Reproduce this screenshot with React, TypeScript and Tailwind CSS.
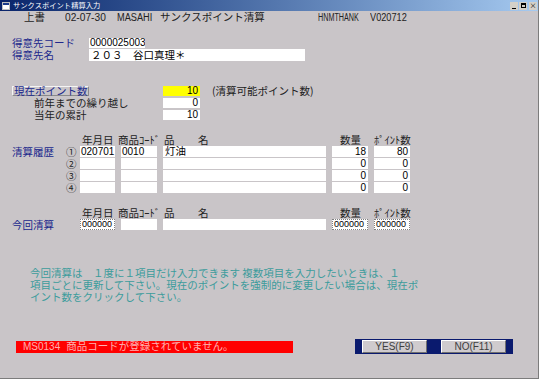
import React from "react";

const jp = "font-['Noto_Sans_CJK_JP','Noto_Sans',sans-serif]";
const num = "font-['Liberation_Sans',Arial,sans-serif]";

function Box({ w, h = "h-[11px]", text = "", right = false, bg = "bg-white", extra = "", size = "text-[10px]" }: { w: string; h?: string; text?: string; right?: boolean; bg?: string; extra?: string; size?: string }) {
  return (
    <div className={`${w} ${h} ${bg} ${extra} flex items-center ${right ? "justify-end pr-[2px]" : "pl-[1px]"} ${size} leading-none text-black ${num} overflow-hidden whitespace-nowrap`}>
      {text}
    </div>
  );
}

function HistoryRow({ mark, label, cells }: { mark: string; label?: string; cells: string[] }) {
  return (
    <div className="flex h-[11px] items-center pl-[12px]">
      <div className="w-[54px] text-[10.5px] leading-[11px] text-[#20288c]">{label}</div>
      <div className="w-[14px] text-[10.5px] leading-[11px] text-[#222]">{mark}</div>
      <Box w="w-[35px]" text={cells[0]} />
      <Box w="w-[36px] ml-[6px]" text={cells[1]} />
      <div className={`ml-[6px] flex h-[11px] w-[163px] items-center bg-white pl-[2px] text-[10.5px] leading-none text-black ${jp}`}>{cells[2]}</div>
      <Box w="w-[36px] ml-[6px]" text={cells[3]} right />
      <Box w="w-[36px] ml-[6px]" text={cells[4]} right />
    </div>
  );
}

function ColumnHeads() {
  return (
    <div className="flex h-[12px] items-center pl-[82px] text-[10.5px] leading-none text-[#222]">
      <span className="w-[36px]">年月日</span>
      <span className="w-[46px]">商品ｺｰﾄﾞ</span>
      <span className="w-[34px]">品</span>
      <span className="w-[142px]">名</span>
      <span className="w-[34px]">数量</span>
      <span>ﾎﾟｲﾝﾄ数</span>
    </div>
  );
}

function Narrow({ w, scale, children }: { w: string; scale: string; children: React.ReactNode }) {
  return (
    <span className={`${w} whitespace-nowrap`}>
      <span className={`inline-block origin-left ${scale} ${num} text-[10px]`}>{children}</span>
    </span>
  );
}

export default function App() {
  return (
    <div className={`flex h-[379px] w-[539px] flex-col overflow-hidden border-r border-b border-[#7c7c7c] bg-[#c9c5c8] ${jp}`}>
      {/* title bar */}
      <div className="flex h-[11px] items-center bg-gradient-to-r from-[#0a246a] to-[#a6caf0] pl-[2px] pr-[1px]">
        <div className="flex h-[8px] w-[8px] flex-col border border-[#c0c0c0] bg-white">
          <div className="h-[2px] bg-[#1c3c8c]" />
        </div>
        <span className="ml-[3px] text-[7.3px] leading-none text-white">サンクスポイント精算入力</span>
        <div className="ml-auto flex gap-[1px]">
          <div className="flex h-[8px] w-[8px] items-end justify-center bg-[#d4d0c8] pb-[1px]"><div className="h-[1px] w-[4px] bg-black" /></div>
          <div className="flex h-[8px] w-[8px] items-center justify-center bg-[#d4d0c8]"><div className="h-[5px] w-[5px] border border-t-2 border-black" /></div>
          <div className="ml-[1px] flex h-[8px] w-[8px] items-center justify-center bg-[#d4d0c8] text-[7px] leading-none text-black">×</div>
        </div>
      </div>

      {/* header */}
      <div className="mt-[1px] flex h-[11px] items-center pl-[24px] text-[10.5px] leading-none text-[#222]">
        <span className="w-[41px]">上書</span>
        <Narrow w="w-[52px]" scale="scale-x-[1.02]">02-07-30</Narrow>
        <Narrow w="w-[43px]" scale="scale-x-[0.92]">MASAHI</Narrow>
        <span className="w-[158px]">サンクスポイント清算</span>
        <Narrow w="w-[52px]" scale="scale-x-[0.72]">HNMTHANK</Narrow>
        <Narrow w="w-[45px]" scale="scale-x-[0.92]">V020712</Narrow>
      </div>

      {/* customer */}
      <div className="mt-[15px] flex h-[10px] items-center pl-[12px]">
        <span className="w-[77px] text-[10.5px] leading-[10px] text-[#20288c]">得意先コード</span>
        <Box w="w-[56px]" h="h-[10px]" text="0000025003" />
      </div>
      <div className="mt-[1px] flex h-[12px] items-center pl-[12px]">
        <span className="w-[77px] text-[10.5px] leading-[12px] text-[#20288c]">得意先名</span>
        <div className="flex h-[12px] w-[216px] items-center bg-white pl-[2px] text-[10.5px] leading-none text-black">２０３　谷口真理＊</div>
      </div>

      {/* points */}
      <div className="mt-[25px] flex h-[10px] items-center pl-[12px]">
        <button className="flex h-[10px] w-[77px] items-center border-t border-l border-r border-b border-t-[#f4f4f4] border-l-[#f4f4f4] border-r-[#8a8a8a] border-b-[#8a8a8a] pl-[1px] text-[10.5px] leading-none text-[#20288c]">
          現在ポイント数
        </button>
        <Box w="w-[37px] ml-[74px]" h="h-[10px]" bg="bg-[#ffff00]" text="10" right />
        <span className="ml-[12px] text-[10.5px] leading-none text-[#222]">(清算可能ポイント数)</span>
      </div>
      <div className="mt-[2px] flex h-[10px] items-center pl-[34px]">
        <span className="w-[129px] text-[10.5px] leading-[10px] text-[#222]">前年までの繰り越し</span>
        <Box w="w-[37px]" h="h-[10px]" text="0" right />
      </div>
      <div className="mt-[2px] flex h-[10px] items-center pl-[34px]">
        <span className="w-[129px] text-[10.5px] leading-[10px] text-[#222]">当年の累計</span>
        <Box w="w-[37px]" h="h-[10px]" text="10" right />
      </div>

      {/* history */}
      <div className="mt-[14px]">
        <ColumnHeads />
      </div>
      <div className="flex flex-col gap-[1px]">
        <HistoryRow mark="①" label="清算履歴" cells={["020701", "0010", "灯油", "18", "80"]} />
        <HistoryRow mark="②" cells={["", "", "", "0", "0"]} />
        <HistoryRow mark="③" cells={["", "", "", "0", "0"]} />
        <HistoryRow mark="④" cells={["", "", "", "0", "0"]} />
      </div>

      {/* this time */}
      <div className="mt-[14px]">
        <ColumnHeads />
      </div>
      <div className="flex h-[11px] items-center pl-[12px]">
        <div className="w-[68px] text-[10.5px] leading-[11px] text-[#20288c]">今回清算</div>
        <Box w="w-[35px]" text="000000" size="text-[9px]" extra="border border-dotted border-[#808080]" />
        <Box w="w-[36px] ml-[6px]" />
        <Box w="w-[163px] ml-[6px]" />
        <Box w="w-[36px] ml-[6px]" text="000000" size="text-[9px]" extra="border border-dotted border-[#808080]" />
        <Box w="w-[36px] ml-[6px]" text="000000" size="text-[9px]" extra="border border-dotted border-[#808080]" />
      </div>

      {/* help */}
      <div className="mt-[37px] flex flex-col pl-[30px] text-[10.5px] leading-[12px] whitespace-nowrap text-[#3c9c9c]">
        <span>今回清算は　１度に１項目だけ入力できます 複数項目を入力したいときは、１</span>
        <span>項目ごとに更新して下さい。現在のポイントを強制的に変更したい場合は、現在ポ</span>
        <span>イント数をクリックして下さい。</span>
      </div>

      {/* footer */}
      <div className="mt-[36px] flex h-[15px] items-center pl-[16px]">
        <div className="flex h-[12px] w-[277px] items-center bg-[#ff0000] pl-[7px] text-[10.5px] leading-none text-[#ffb0b0]">
          <span className={`${num} text-[10px] mr-[6px]`}>MS0134</span>
          <span>商品コードが登録されていません。</span>
        </div>
        <div className="ml-[62px] flex h-[15px] w-[158px] items-center bg-[#0a1a6e] px-[7px]">
          <button className={`flex h-[13px] w-[65px] items-center justify-center border-t border-l border-r border-b border-t-white border-l-white border-r-[#707070] border-b-[#707070] bg-[#cfcbce] text-[10px] leading-none text-[#404040] ${num}`}>
            YES(F9)
          </button>
          <button className={`ml-[14px] flex h-[13px] w-[65px] items-center justify-center border-t border-l border-r border-b border-t-white border-l-white border-r-[#707070] border-b-[#707070] bg-[#cfcbce] text-[10px] leading-none text-[#404040] ${num}`}>
            NO(F11)
          </button>
        </div>
      </div>
    </div>
  );
}
